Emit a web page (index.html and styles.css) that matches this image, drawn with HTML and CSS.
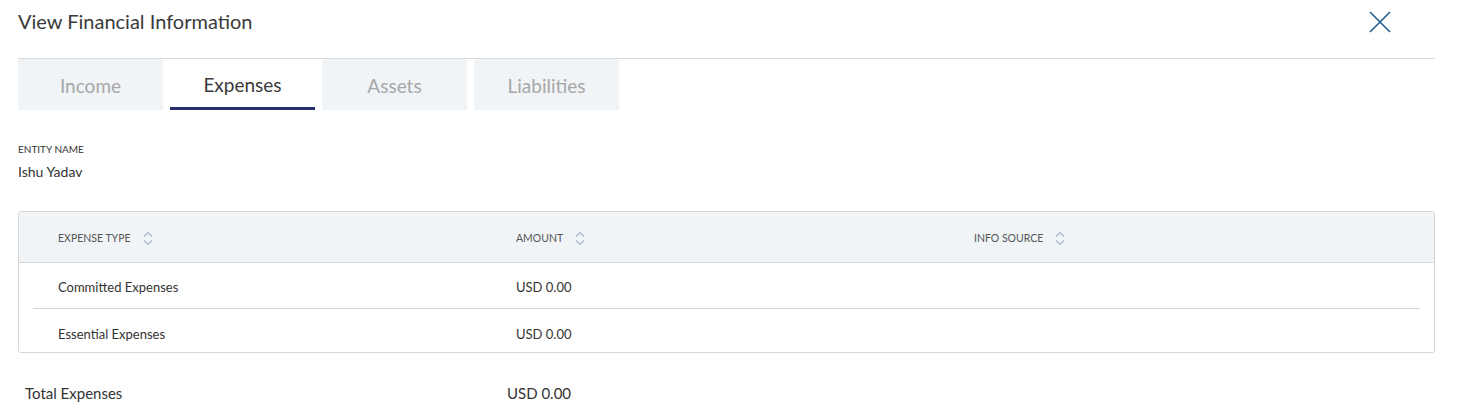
FILE: index.html
```html
<!DOCTYPE html>
<html lang="en">
<head>
<meta charset="utf-8">
<title>View Financial Information</title>
<link rel="stylesheet" href="styles.css">
</head>
<body>
<div class="modal">
  <header class="modal-header">
    <h1 class="modal-title">View Financial Information</h1>
    <button class="close-btn" aria-label="Close">
      <svg width="22" height="22" viewBox="0 0 22 22"><path d="M1 1 L21 21 M21 1 L1 21" stroke="#1f5c93" stroke-width="1.6" fill="none"/></svg>
    </button>
  </header>
  <nav class="tabs">
    <div class="tab">Income</div>
    <div class="tab active">Expenses</div>
    <div class="tab">Assets</div>
    <div class="tab">Liabilities</div>
  </nav>
  <section class="entity">
    <div class="entity-label">ENTITY NAME</div>
    <div class="entity-value">Ishu Yadav</div>
  </section>
  <div class="table">
    <div class="thead">
      <div class="th">EXPENSE TYPE <span class="sort"><svg width="10" height="15" viewBox="0 0 10 15"><path d="M1 5.5 L5 1.5 L9 5.5" stroke="#a9b8cb" stroke-width="1.2" fill="none"/><path d="M1 9.5 L5 13.5 L9 9.5" stroke="#a9b8cb" stroke-width="1.2" fill="none"/></svg></span></div>
      <div class="th">AMOUNT <span class="sort"><svg width="10" height="15" viewBox="0 0 10 15"><path d="M1 5.5 L5 1.5 L9 5.5" stroke="#a9b8cb" stroke-width="1.2" fill="none"/><path d="M1 9.5 L5 13.5 L9 9.5" stroke="#a9b8cb" stroke-width="1.2" fill="none"/></svg></span></div>
      <div class="th">INFO SOURCE <span class="sort"><svg width="10" height="15" viewBox="0 0 10 15"><path d="M1 5.5 L5 1.5 L9 5.5" stroke="#a9b8cb" stroke-width="1.2" fill="none"/><path d="M1 9.5 L5 13.5 L9 9.5" stroke="#a9b8cb" stroke-width="1.2" fill="none"/></svg></span></div>
    </div>
    <div class="tbody">
      <div class="tr first">
        <div class="td">Committed Expenses</div>
        <div class="td">USD 0.00</div>
        <div class="td"></div>
      </div>
      <div class="tr last">
        <div class="td">Essential Expenses</div>
        <div class="td">USD 0.00</div>
        <div class="td"></div>
      </div>
    </div>
  </div>
  <div class="total">
    <div class="total-label">Total Expenses</div>
    <div class="total-value">USD 0.00</div>
  </div>
</div>
</body>
</html>
```

FILE: styles.css
```css
* { box-sizing: border-box; }
html, body { margin: 0; padding: 0; background: #ffffff; }
body {
  font-family: Lato, "Liberation Sans", sans-serif;
  color: #333333;
  width: 1472px;
  height: 417px;
  overflow: hidden;
}
.modal {
  margin-left: 18px;
  width: 1417px;
}
.modal-header {
  height: 59px;
  border-bottom: 1px solid #d9d9d9;
  display: flex;
  justify-content: space-between;
  align-items: flex-start;
}
.modal-title {
  margin: 0;
  padding-top: 8px;
  font-size: 20px;
  line-height: 26px;
  font-weight: 400;
  color: #3a3a3a;
}
.close-btn {
  margin: 11px 44px 0 0;
  padding: 0;
  border: 0;
  background: transparent;
  width: 22px;
  height: 22px;
  display: flex;
}
.tabs {
  display: flex;
  gap: 7px;
}
.tab {
  width: 145px;
  height: 51px;
  background: #f0f4f7;
  color: #a7a7a7;
  font-size: 19px;
  display: flex;
  align-items: center;
  justify-content: center;
  padding-top: 1px;
}
.tab.active {
  background: #ffffff;
  color: #3a3a3a;
  border-bottom: 3px solid #272f6e;
  padding-top: 2px;
}
.entity {
  padding-top: 32px;
}
.entity-label {
  font-size: 10px;
  line-height: 14px;
  color: #333333;
}
.entity-value {
  font-size: 14px;
  line-height: 18px;
  margin-top: 7px;
}
.table {
  margin-top: 30px;
  border: 1px solid #d6d6d6;
  border-radius: 3px;
  overflow: hidden;
}
.thead {
  height: 51px;
  background: #f0f4f7;
  border-bottom: 1px solid #d6d6d6;
  display: grid;
  grid-template-columns: 458px 458px 1fr;
  padding-left: 39px;
  align-items: center;
}
.th {
  font-size: 10.5px;
  color: #555555;
  display: flex;
  align-items: center;
  gap: 12px;
  padding-top: 2px;
}
.sort { display: flex; }
.tbody { padding: 0 14px; }
.tr {
  display: grid;
  grid-template-columns: 458px 458px 1fr;
  padding-left: 25px;
  font-size: 13px;
  line-height: 18px;
  padding-top: 15px;
}
.tr.first {
  height: 46px;
  border-bottom: 1px solid #d6d6d6;
}
.tr.last {
  height: 43px;
  padding-top: 16px;
}
.total {
  display: flex;
  padding-left: 7px;
  padding-top: 30px;
  font-size: 15px;
  line-height: 20px;
}
.total-label { width: 482px; }
```
